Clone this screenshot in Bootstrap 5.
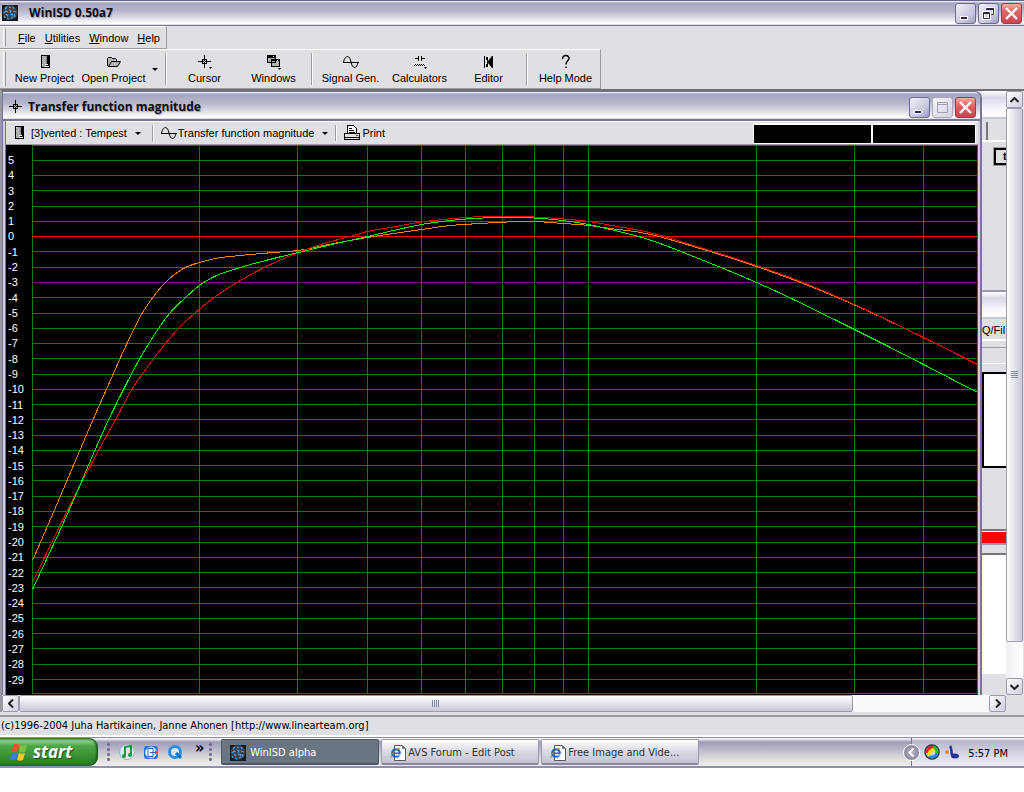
<!DOCTYPE html>
<html lang="en">
<head>
<meta charset="utf-8">
<meta name="viewport" content="width=device-width, initial-scale=1">
<title>WinISD 0.50a7</title>
<link href="https://cdn.jsdelivr.net/npm/bootstrap@5.3.0/dist/css/bootstrap.min.css" rel="stylesheet">
<style>
:root{--face:#e0dfe3;--edge:#77779a;--shade:#9d9da1}
body{font-family:"Liberation Sans",Arial,sans-serif;font-size:11px;line-height:14px;color:#000;background:#fff}
button{font:inherit;color:inherit;padding:0;border:0;background:none}
svg{display:block;flex:none}
.tahoma{font-family:"DejaVu Sans Condensed","DejaVu Sans",sans-serif}
.face{background:var(--face)}
.titlebar{background:linear-gradient(#fff 0,#a5a4bf 2px,#b5b5ca 40%,#e2e2ea 75%,#fff 94%,#d0d0dc)}
.main-title{height:26px;border-top:1px solid #65658a;border-bottom:1px solid var(--edge);padding:0 2px}
.caption{font:bold 12px/18px "Open Sans","Noto Sans",sans-serif;color:#0b0b12;text-shadow:1px 1px 1px #9a9ab4}
.ctls{display:flex;gap:2px}
.ctl{width:21px;height:21px;border:1px solid #6a6a96;border-radius:3px;background:linear-gradient(135deg,#f2f2f8,#c2c2da 70%,#9a9abb);display:grid;place-items:center}
.ctl-close{border-color:#9c3c50;background:linear-gradient(#efb39c,#e5686a 35%,#c9434f)}
.ctl-off{border-color:#a9a9bd;background:linear-gradient(135deg,#f4f4f8,#d3d3e0)}
.menu-band{height:23px;padding-right:6px;border-right:1px solid var(--shade);border-bottom:1px solid var(--shade);border-top:1px solid #fff}
.menu-band a{color:#000;text-decoration:none}
.menu-items{gap:9px}
.grip{width:3px;border-left:1px solid #fff;border-right:1px solid var(--shade);margin:2px 0 2px 3px}
.tool-band{height:40px;border-right:1px solid var(--shade);border-top:1px solid #fff;border-bottom:1px solid var(--shade)}
.tool{width:69px;display:flex;flex-direction:column;align-items:center;padding-top:4px;gap:1px}
.vsep{width:2px;border-left:1px solid var(--shade);border-right:1px solid #fff;margin:3px}
.caret{width:0;height:0;border:3px solid transparent;border-top-color:#000;border-bottom:0}
.mdi{border-top:2px solid #6f6f72;border-left:2px solid #9999a2;background:var(--face)}
.child{border:solid var(--edge);border-width:1px 2px 0 1px;border-radius:0 7px 0 0;background:#cfcfdf;min-width:0}
.child-title{height:29px;padding:3px 4px 0 5px;border-bottom:2px solid var(--edge);border-radius:0 6px 0 0}
.child-body{margin:0 2px;border-left:1px solid var(--edge)}
.child-tools{height:24px;border-top:1px solid #fff;border-bottom:1px solid var(--shade);padding:0 2px 0 5px}
.readout{height:21px;border:2px solid #fff;border-width:2px 1px 1px;background:#000}
.axis{width:26px;padding:8px 0 8px 2px;color:#fff}
.axis span{line-height:14px;height:14px}
.plot{min-width:0;height:550px;background:#000}
.plot line,.plot polyline{fill:none;stroke-width:1;vector-effect:non-scaling-stroke;shape-rendering:crispEdges}
.grid-line{stroke:#008000}.zero-line{stroke:#f00}.cutoff-line{stroke:#800080}
.behind{width:24px;overflow:hidden;white-space:nowrap}
.pale-title{background:linear-gradient(#fff,#d8d8e8 25%,#f4f4fa 65%,#fff);border-bottom:2px solid #c4c8dc}
.clipped{height:17px;width:30px;border:2px solid #000;border-right:0;outline:1px solid var(--shade);line-height:13px}
.vbar{width:17px;background:linear-gradient(90deg,#f0f0f4,#fff);margin-right:1px}
.sbtn{width:17px;height:17px;border:1px solid #9a9ab0;border-radius:2px;background:linear-gradient(135deg,#fdfdff,#cfcfdf);display:grid;place-items:center}
.vthumb{height:534px;border:1px solid #9a9ab0;border-radius:2px;background:linear-gradient(90deg,#fff,#c8c8d8);display:grid;place-items:center}
.hbar{background:#fafafc;height:17px;border-left:2px solid #9999a2}
.hthumb{width:86%;border:1px solid #9a9ab0;border-radius:2px;background:linear-gradient(#fff,#c8c8d8);display:grid;place-items:center}
.status{height:22px;border-top:2px solid #9d9da1;border-bottom:2px solid #fff;padding:2px 1px}
.taskbar{height:31px;border-top:1px solid #8d8dab;border-bottom:2px solid #8f8fab;background:linear-gradient(#fff 0,#d5d5e2 2px,#9c9cb8 4px,#b8b8c8 40%,#dededf 75%,#eee)}
.start{width:98px;height:28px;padding-left:9px;gap:4px;color:#fff;border-radius:0 9px 9px 0;background:linear-gradient(#2f7d2f,#8cd07f 3px,#4fa548 8px,#3c9438 60%,#2c7f2c 90%,#236c23);box-shadow:inset -2px 0 2px #1d5d1d;font:italic bold 17px/20px "Open Sans","Noto Sans",sans-serif;text-shadow:1px 1px 1px #1d4d1d}
.task{width:158px;height:26px;padding:3px 8px 0;color:#333;border:1px solid #9a9aae;border-bottom:2px solid #86869c;border-radius:2px;background:linear-gradient(#fff,#dcdce6 45%,#c3c3d4)}
.task-on{color:#fff;border-color:#4d5763;background:#6a7582}
.quick{gap:8px;margin-left:8px}
.dots{width:5px;height:20px;background:radial-gradient(circle,#6c6c88 1px,transparent 2px) 0 0/5px 5px}
.tray{border-left:1px solid #777792;background:linear-gradient(#fff 0,#b5b5cc 3px,#d2d2e0 50%,#eeeef4)}
.tray time{padding-top:3px}
.tray-toggle{width:17px;height:17px;border-radius:50%;border:1px solid #fff;background:radial-gradient(#b6b6c6,#767692);margin-left:-9px;display:grid;place-items:center}
</style>
</head>
<body class="m-0">
<svg width="0" height="0" class="position-absolute" aria-hidden="true">
  <defs>
    <symbol id="app" viewBox="0 0 16 16"><path fill="#17181d" d="M0 0h16v16H0z"/><circle cx="8" cy="7.500" r="7.500" fill="#3b3f48"/><path stroke="#4da0e8" stroke-width="1.300" fill="none" d="M3 4l2-2M7 2l2 1M11 2l1 2M2 8l2-2 2 1M7 5l2 1-1 2M11 6l3 1M4 9l2 2M8 10l2-1 1 2M12 9l1 2-1 1M5 13l2 1M9 13l2-1M2 11l1 2"/></symbol>
    <symbol id="box" viewBox="0 0 16 16"><g shape-rendering="crispEdges"><path fill="#000" d="M4 1h9v13H4z"/><path fill="#a8a8a8" d="M5 2h4v11H5z"/><path fill="#d8d8d8" d="M5 2h1v1H5zM7 4h1v1H7zM5 6h1v1H5zM7 8h1v1H7zM5 10h1v1H5z"/><path fill="#888" d="M9 2h1v8H9z"/><path fill="#fff" d="M8 10h3v1H8zM8 12h4v1H8z"/></g></symbol>
    <symbol id="folder" viewBox="0 0 16 16"><path fill="#b6b6b6" stroke="#000" d="M2.500 12.500l-1-1v-7l1-1h3l1 1h3l1 1v2M2.500 12.500l3-5h9l-3 5z"/></symbol>
    <symbol id="cross" viewBox="0 0 16 16"><g fill="none" stroke="#000" shape-rendering="crispEdges"><path d="M7.500 1v13M1 7.500h13"/><path d="M5.500 5.500h4v4h-4z"/></g><path fill="#ff0" d="M7 7h1v1H7z"/></symbol>
    <symbol id="wins" viewBox="0 0 16 16"><g shape-rendering="crispEdges"><path fill="#b0b0b0" stroke="#000" d="M1.500 1.500h8v7h-8zM5.500 5.500h8v7h-8z"/><path fill="#000" d="M1 1h9v3H1zM5 5h9v2H5z"/><path fill="#fff" d="M7 2h1v1H7zM11 6h1v1h-1z"/></g></symbol>
    <symbol id="wave" viewBox="0 0 16 16"><path fill="none" stroke="#000" d="M.5 8.500C1 4.500 3 2.500 4.500 2.500S7.500 5 8 8s2 5.500 3.500 5.500 3-2 3.500-5"/><path stroke="#000" shape-rendering="crispEdges" d="M0 8.500h16"/></symbol>
    <symbol id="calc" viewBox="0 0 16 16"><g fill="none" stroke="#000" shape-rendering="crispEdges"><path d="M3 4.500h4M9 4.500h4M6.500 2v5M9.500 2v5"/><path d="M3 10.500h1M5 10.500h1M7 10.500h1M9 10.500h1M11 10.500h1M2 11.500h1M4 11.500h1M6 11.500h1M8 11.500h1M10 11.500h1M12 11.500h1"/></g></symbol>
    <symbol id="spk" viewBox="0 0 16 16"><path fill="#000" d="M3 2h1v12H3zM5 3h2v10H5zM7 7l4-5h1v12h-1L7 9z"/><path fill="#fff" d="M5 6h1v4H5zM7 3h1v3H7zM7 11h1v2H7z"/></symbol>
    <symbol id="print" viewBox="0 0 16 16"><g stroke="#000" shape-rendering="crispEdges"><path fill="#fff" d="M3.500 8.500v-8h6l3 3v5z"/><path fill="#e0e0e0" d="M.5 8.500h15v6H.5z"/><path fill="none" d="M5 3.500h3M5 5.500h5M5 7.500h6M1 12.500h14"/></g><path fill="#f00" d="M12 10h2v1h-2z"/></symbol>
    <symbol id="x" viewBox="0 0 15 15"><path stroke="#fff" stroke-width="2.400" d="M2 2l11 11M13 2L2 13"/></symbol>
    <symbol id="min" viewBox="0 0 15 15"><path fill="#fff" d="M2 10h8v4H2z"/><path fill="#28283e" d="M3 11h6v2H3z"/></symbol>
    <symbol id="ie" viewBox="0 0 18 16"><path fill="#fff" stroke="#555" d="M4.500.5h8l3 3v12h-11z"/><path fill="#777" d="M12 0v4h4z"/><circle cx="6" cy="8" r="3.700" fill="none" stroke="#1366d6" stroke-width="2.200"/><path stroke="#1366d6" stroke-width="1.600" d="M3 8.300h7"/><path stroke="#fff" d="M7 10h4"/><path fill="none" stroke="#b39328" d="M1 13c-1-2 3-8 9-10"/></symbol>
  </defs>
</svg>

<header class="titlebar main-title d-flex align-items-center">
  <svg width="16" height="16"><use href="#app"/></svg>
  <h1 class="caption m-0 ms-2 me-auto">&nbsp;WinISD 0.50a7</h1>
  <div class="ctls">
    <button class="ctl" aria-label="Minimize"><svg width="15" height="15"><use href="#min"/></svg></button>
    <button class="ctl" aria-label="Restore"><svg width="15" height="15" fill="none" stroke="#fff" stroke-width="3"><path d="M5.500 2.500h7v6M2.500 6.500h6v6h-6z"/><path stroke="#28283e" stroke-width="1" d="M5.500 3.500v-1h7v6h-2M2.500 6.500h6v6h-6zM5 3.500h7M3 7.500h5"/></svg></button>
    <button class="ctl ctl-close" aria-label="Close"><svg width="15" height="15"><use href="#x"/></svg></button>
  </div>
</header>

<div class="face">
  <div class="d-flex">
    <nav class="menu-band d-flex align-items-center">
      <span class="grip align-self-stretch me-2"></span>
      <div class="menu-items d-flex ps-1"><a href="#"><u>F</u>ile</a><a href="#"><u>U</u>tilities</a><a href="#"><u>W</u>indow</a><a href="#"><u>H</u>elp</a></div>
    </nav>
  </div>
  <div class="d-flex">
    <div class="tool-band d-flex" role="toolbar">
      <span class="grip me-1"></span>
      <button class="tool"><svg width="16" height="16"><use href="#box"/></svg>New Project</button>
      <button class="tool"><svg width="16" height="16"><use href="#folder"/></svg>Open Project</button>
      <button class="px-1 d-flex align-items-center" aria-label="Recent projects"><span class="caret"></span></button>
      <span class="vsep"></span>
      <button class="tool"><svg width="16" height="16"><use href="#cross"/><path d="M12 13h3l-1.500 2z"/></svg>Cursor</button>
      <button class="tool"><svg width="16" height="16"><use href="#wins"/><path d="M12 14h3l-1.500 2z"/></svg>Windows</button>
      <span class="vsep"></span>
      <button class="tool"><svg width="16" height="16"><use href="#wave"/></svg>Signal Gen.</button>
      <button class="tool"><svg width="16" height="16"><use href="#calc"/><path d="M12 13h3l-1.500 2z"/></svg>Calculators</button>
      <button class="tool"><svg width="16" height="16"><use href="#spk"/></svg>Editor</button>
      <span class="vsep"></span>
      <button class="tool"><svg width="16" height="16" fill="none" stroke="#000" stroke-width="1.400"><path d="M4.500 5c0-5 7-4 6.500-.5C10.500 7 8 7 8 10.500M8 12.500V14"/></svg>Help Mode</button>
    </div>
  </div>
</div>

<main class="mdi d-flex">
  <section class="child flex-grow-1">
    <header class="titlebar child-title d-flex align-items-center">
      <svg width="16" height="16"><use href="#cross"/></svg>
      <h2 class="caption m-0 ms-1 me-auto">Transfer function magnitude</h2>
      <div class="ctls">
        <button class="ctl" aria-label="Minimize"><svg width="15" height="15"><use href="#min"/></svg></button>
        <button class="ctl ctl-off" aria-label="Maximize" disabled><svg width="15" height="15" fill="none" stroke="#a0a0b4"><path d="M2.500 2.500h10v10h-10zM3 4.500h9"/></svg></button>
        <button class="ctl ctl-close" aria-label="Close"><svg width="15" height="15"><use href="#x"/></svg></button>
      </div>
    </header>
    <div class="child-body face">
      <div class="child-tools d-flex align-items-center">
        <button class="d-flex align-items-center"><svg width="20" height="16" viewBox="0 0 20 16"><use href="#box" width="16" height="16"/></svg><span class="me-1">[3]vented : Tempest</span><span class="caret ms-1 me-2"></span></button>
        <span class="vsep align-self-stretch"></span>
        <button class="d-flex align-items-center ms-1"><svg width="17" height="16"><use href="#wave" width="16"/></svg><span class="me-1">Transfer function magnitude</span><span class="caret ms-1 me-1"></span></button>
        <span class="vsep align-self-stretch"></span>
        <button class="d-flex align-items-center ms-1"><svg width="18" height="16" viewBox="0 0 18 16"><use href="#print" width="16" height="16"/></svg>Print</button>
        <div class="readout ms-auto" style="width:119px"></div>
        <div class="readout" style="width:104px"></div>
      </div>
      <div class="d-flex bg-black">
        <div class="axis d-flex flex-column justify-content-between" id="axis"></div>
        <svg class="plot flex-fill" id="plot" viewBox="0 0 946 550" preserveAspectRatio="none" role="img" aria-label="Magnitude in dB against frequency, 10 Hz to 500 Hz"></svg>
      </div>
    </div>
  </section>
  <aside class="behind face flex-shrink-0 d-flex flex-column">
    <div class="pale-title" style="height:28px"></div>
    <div style="height:23px;border-bottom:2px solid #fff"><div style="width:6px;height:18px;margin-top:3px;border-right:2px solid #77777a"></div></div>
    <div class="ms-2 mt-1 ps-1" style="padding-top:2px"><div class="clipped ps-1 fw-bold">&nbsp;t</div></div>
    <div style="height:127px;border-bottom:2px solid #9a9ab0"></div>
    <div class="pale-title" style="height:27px"></div>
    <div style="height:22px;padding-top:4px;border-bottom:2px solid #fff">Q/Fil</div>
    <div style="height:7px;border-bottom:1px solid #9d9da1"></div>
    <div style="height:16px;border-bottom:1px solid #fff"></div>
    <div style="height:8px"></div>
    <div class="bg-white" style="height:96px;border:2px solid #000;border-right:0"></div>
    <div style="height:63px;border-bottom:2px solid #77777a"></div>
    <div style="height:12px;background:#f00;border-top:1px solid #fff"></div>
    <div style="height:12px;border-top:2px solid #9a9ab0;border-bottom:2px solid #77777a"></div>
    <div class="bg-white" style="height:119px"></div>
  </aside>
  <div class="vbar flex-shrink-0 d-flex flex-column">
    <button class="sbtn" aria-label="Scroll up"><svg width="9" height="6" fill="none" stroke="#222" stroke-width="2"><path d="M.5 5l4-4 4 4"/></svg></button>
    <div class="vthumb"><svg width="7" height="8" stroke="#8088a0"><path d="M0 .5h7M0 2.500h7M0 4.500h7M0 6.500h7"/></svg></div>
    <button class="sbtn mt-auto" aria-label="Scroll down"><svg width="9" height="6" fill="none" stroke="#222" stroke-width="2"><path d="M.5 1l4 4 4-4"/></svg></button>
  </div>
</main>
<div class="face d-flex">
  <div class="hbar d-flex flex-grow-1">
    <button class="sbtn" aria-label="Scroll left"><svg width="6" height="9" fill="none" stroke="#222" stroke-width="2"><path d="M5 .5l-4 4 4 4"/></svg></button>
    <div class="flex-grow-1"><div class="hthumb h-100"><svg width="8" height="7" stroke="#8088a0"><path d="M.5 0v7M2.500 0v7M4.500 0v7M6.500 0v7"/></svg></div></div>
    <button class="sbtn" aria-label="Scroll right"><svg width="6" height="9" fill="none" stroke="#222" stroke-width="2"><path d="M1 .5l4 4-4 4"/></svg></button>
  </div>
  <div style="width:18px"></div>
</div>
<div class="face" style="height:3px"></div>
<div class="status face tahoma">(c)1996-2004 Juha Hartikainen, Janne Ahonen [http://www.linearteam.org]</div>

<footer class="taskbar tahoma d-flex align-items-center">
  <button class="start d-flex align-items-center"><svg width="20" height="18"><path fill="#e8552d" d="M4 2c2-2 4-1 6 0L9 9C7 8 5 8 3 9z"/><path fill="#7cc243" d="M11 2c2 1 4 1 7 0l-2 7c-2 1-4 1-6 0z"/><path fill="#3a7be0" d="M3 10c2-1 4-1 6 0l-2 7c-2-1-4-1-6 0z"/><path fill="#f6c92b" d="M10 10c2 1 4 1 6 0l-2 7c-2 1-4 1-6 0z"/></svg>start</button>
  <span class="dots ms-2"></span>
  <div class="quick d-flex align-items-center">
    <svg width="16" height="16"><circle cx="8" cy="8" r="7.500" fill="#dce6f4" stroke="#9bb"/><path fill="none" stroke="#1f9a3a" stroke-width="2" d="M6 12V3l6-1v9"/><circle cx="5" cy="12" r="2" fill="#1f9a3a"/><circle cx="11" cy="11" r="2" fill="#1f9a3a"/></svg>
    <svg width="16" height="16"><rect x="1" y="2" width="14" height="13" rx="3" fill="#2677dd"/><circle cx="8" cy="8.500" r="5.500" fill="#fff" stroke="#9cf"/><path fill="none" stroke="#1a5cc0" d="M5 4.500h5v8H5zM7 8.500h6"/><path fill="#e43" d="M12 6l3 2.500-3 2z"/></svg>
    <svg width="16" height="16"><circle cx="8" cy="8" r="5.500" fill="#d4e8fa" stroke="#2b8ee0" stroke-width="3"/><path stroke="#1672c8" stroke-width="3" d="M9 9l5 5"/></svg>
    <strong class="fs-6 mb-2 ms-1">»</strong>
  </div>
  <span class="dots ms-1 me-2"></span>
  <div class="d-flex" style="gap:2px">
    <button class="task task-on d-flex align-items-center"><svg width="16" height="16" class="me-1"><use href="#app"/></svg>WinISD alpha</button>
    <button class="task d-flex align-items-center"><svg width="18" height="16"><use href="#ie"/></svg>AVS Forum - Edit Post</button>
    <button class="task d-flex align-items-center"><svg width="18" height="16"><use href="#ie"/></svg>Free Image and Vide...</button>
  </div>
  <div class="tray ms-auto h-100 d-flex align-items-center gap-1">
    <button class="tray-toggle" aria-label="Show hidden icons"><svg width="7" height="9" fill="none" stroke="#fff" stroke-width="2"><path d="M5.500.5l-4 4 4 4"/></svg></button>
    <svg width="16" height="16" fill="none" stroke-width="3"><circle cx="8" cy="8" r="7" stroke="#234" stroke-width="1.500"/><path stroke="#e22" d="M3 9c0-5 5-7 8-5"/><path stroke="#2b2" d="M9 3c4 1 5 5 3 8"/><path stroke="#28e" d="M13 9c-1 4-6 5-8 3"/><path stroke="#fd0" d="M5 12c-1-4 2-5 5-7"/></svg>
    <svg width="16" height="16"><circle cx="3" cy="8" r="2" fill="#f08a24"/><path fill="none" stroke="#26349c" stroke-width="2.500" d="M6 2c2 2 1 6 2 9"/><ellipse cx="11" cy="12" rx="4" ry="2.500" fill="#26349c"/></svg>
    <time class="ms-1 me-3">5:57 PM</time>
  </div>
</footer>

<script src="https://cdn.jsdelivr.net/npm/bootstrap@5.3.0/dist/js/bootstrap.bundle.min.js"></script>
<script>
// Plot space: 946 x 550 units, 10 Hz at the left edge, 5 dB at y = 15.
const plot = document.getElementById('plot'), axis = document.getElementById('axis');
const SVG = 'http://www.w3.org/2000/svg';
function add(tag, attrs) {
  const el = document.createElementNS(SVG, tag);
  for (const k in attrs) el.setAttribute(k, attrs[k]);
  plot.append(el);
}
const rule = (x1, y1, x2, y2, cls) => add('line', {x1, y1, x2, y2, class: cls});
const yOf = db => Math.floor(15.4 + (5 - db) * 519 / 34) + .5;
for (let db = 5; db >= -29; db--) {
  const s = document.createElement('span');
  s.textContent = db;
  axis.append(s);
  if (db !== 0 && db !== -3) rule(0, yOf(db), 946, yOf(db), 'grid-line');
}
rule(0, .5, 946, .5, 'grid-line');
rule(0, 548.5, 946, 548.5, 'grid-line');
for (const f of [10,20,30,40,50,60,70,80,90,100,200,300,400,500]) {
  const x = Math.round(Math.log10(f / 10) * 945 / Math.log10(50)) + .5;
  rule(x, 0, x, 549, 'grid-line');
}
rule(0, yOf(-3), 946, yOf(-3), 'cutoff-line');
rule(0, yOf(0), 946, yOf(0), 'zero-line');

// Sampled responses, joined by a cubic Hermite spline with weighted tangents.
function curve(pts, color) {
  const n = pts.length - 1, out = [];
  const h = i => pts[i + 1][0] - pts[i][0];
  const d = i => (pts[i + 1][1] - pts[i][1]) / h(i);
  const m = i => i === 0 ? d(0) : i === n ? d(n - 1) : (d(i - 1) * h(i) + d(i) * h(i - 1)) / (h(i) + h(i - 1));
  for (let i = 0; i < n; i++) {
    for (let k = 0; k < h(i); k++) {
      const t = k / h(i), t2 = t * t, t3 = t2 * t;
      const y = (2*t3 - 3*t2 + 1) * pts[i][1] + (t3 - 2*t2 + t) * h(i) * m(i) + (3*t2 - 2*t3) * pts[i + 1][1] + (t3 - t2) * h(i) * m(i + 1);
      out.push((pts[i][0] + k + .5) + ',' + (y + .5).toFixed(2));
    }
  }
  out.push(pts[n].join());
  add('polyline', {points: out.join(' '), stroke: color});
}
curve([[0,415],[17,376],[65,264],[85,219],[94,199],[109,169],[121,151],[134,136],[151,123],[167,117],[183,113],[208,110],[241,107],[265,105],[301,98],[335,92],[361,88],[389,84],[418,80],[448,78],[475,76.500],[500,76],[531,78],[556,80],[578,83],[608,87],[666,102.500],[724,121],[768,137],[822,159.500],[891,192],[945,219]], '#ff8000');
curve([[0,437],[30,375],[67,303],[88,265],[98,246],[110,228.500],[133,198],[146,183],[162,168],[183,151],[208,135],[238,119],[256,111],[279,102],[295,97],[321,90],[335,86],[358,82],[389,76.500],[421,73],[441,71.500],[470,71],[501,71.500],[525,73],[556,76],[585,81],[608,85],[666,101.500],[724,120],[768,136],[822,159],[891,192],[945,219]], '#ff0000');
curve([[0,444],[32,375],[81,264],[91,244],[104,219],[117,197],[126,183],[137,168],[152,153],[167,140],[181,131.500],[208,122],[241,113],[266,107],[308,97],[335,91],[361,85],[389,79],[418,75],[441,73],[470,72],[501,72.500],[525,74.500],[556,79],[578,84],[608,91.500],[666,113],[724,137],[822,184],[848,197],[891,219],[945,247]], '#00ff00');
</script>
</body>
</html>
